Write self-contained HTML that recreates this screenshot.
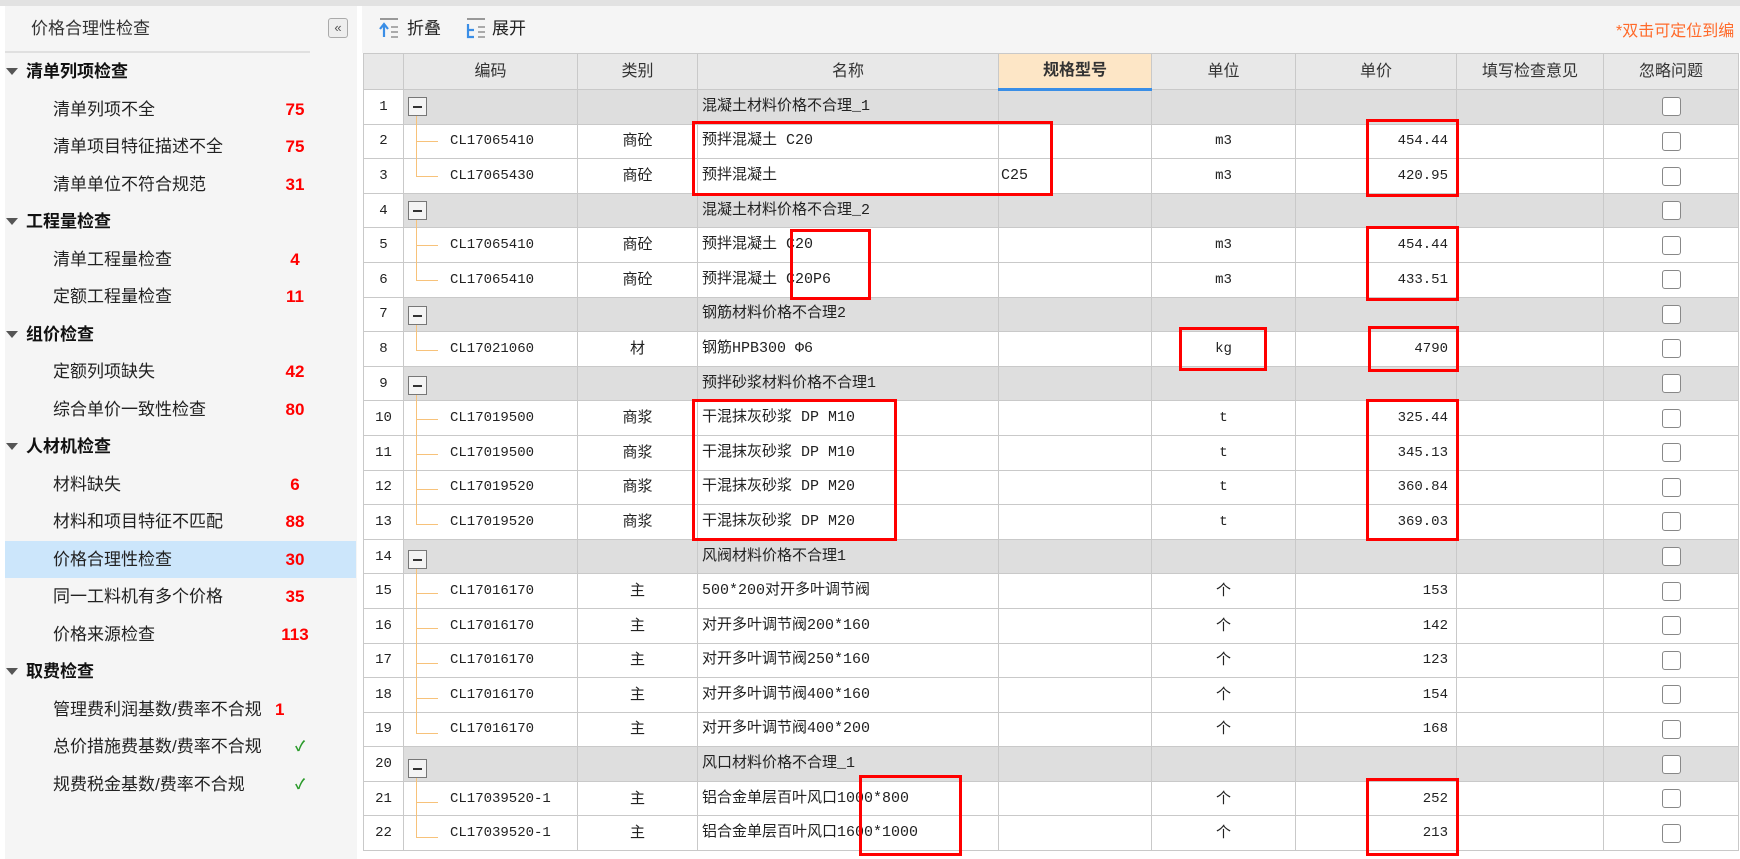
<!DOCTYPE html>
<html><head><meta charset="utf-8">
<style>
*{margin:0;padding:0;box-sizing:border-box}
body{width:1740px;height:859px;overflow:hidden;background:#fff;font-family:"Liberation Sans","Noto Sans CJK SC",sans-serif;position:relative}
.topstrip{position:absolute;left:0;top:0;width:1740px;height:6px;background:#e2e2e2}
.side{position:absolute;left:5px;top:6px;width:352px;height:853px;background:#f5f5f5}
.stitle{position:absolute;left:26px;top:8px;font-size:17px;color:#333}
.sline{position:absolute;left:0;top:45px;width:305px;height:2px;background:#e0e0e0}
.cbtn{position:absolute;left:323px;top:12px;width:20px;height:20px;border:1px solid #aaa;border-radius:3px;background:#eee;font-size:13px;line-height:17px;text-align:center;color:#555}
.si{position:absolute;left:0;width:352px;height:37px;line-height:37px;font-size:17px;color:#222}
.si.g{font-weight:bold;color:#111}
.si.g:before{content:"";position:absolute;left:6px;top:15px;border-left:6px solid transparent;border-right:6px solid transparent;border-top:7px solid #555}
.si.g span{position:absolute;left:26px}
.si.it span.t{position:absolute;left:53px}
.si .n{position:absolute;left:270px;width:50px;text-align:center;color:#f00;font-weight:bold}
.si .ck{position:absolute;left:262px;color:#2a9a2a;font-weight:bold;font-size:14px}
.si.sel{background:#cce6fb}
.tool{position:absolute;left:362px;top:6px;width:1378px;height:47px;background:#f5f5f5}
.tb{position:absolute;top:8px;font-size:17px;color:#222}
.hint{position:absolute;left:1616px;top:17px;font-size:16px;color:#ff6a2a;white-space:nowrap}
table{position:absolute;left:363px;top:53px;border-collapse:collapse;table-layout:fixed;width:1375px}
td,th{border:1px solid #c9c9c9;height:34.6px;font-size:15px;color:#222;white-space:nowrap;overflow:hidden;padding:0 4px;font-weight:normal;line-height:20px}
th{height:36px;background:#e8e8e8;font-size:16px;color:#333}
th.hl{background:#fde6c6;font-weight:bold;border-bottom:3px solid #3a8ee6}
td.rn{text-align:center;background:#fff;font-family:"Liberation Mono",monospace;font-size:14px}
tr.g td{background:#dedede}
tr.g td.rn{background:#fff}
td.code{position:relative;font-family:"Liberation Mono",monospace;font-size:14px;padding-left:46px}
td.c{text-align:center}
td.r{text-align:right;font-family:"Liberation Mono",monospace;font-size:14px;padding-right:8px}
td.nm{font-family:"Liberation Mono","Noto Sans CJK SC",monospace;font-size:15px}
td.mono{font-family:"Liberation Mono",monospace;font-size:14px;text-align:center}
.box{position:absolute;border:3px solid #f00}
.cb{display:inline-block;width:19px;height:19px;border:1px solid #888;border-radius:3px;background:#fff;vertical-align:middle}
.minus{position:absolute;width:19px;height:19px;border:1px solid #777;background:#f4f4f4;left:408px}
.minus:after{content:"";position:absolute;left:4px;top:8px;width:9px;height:1.5px;background:#333}
.vl{position:absolute;left:416px;width:1px;background:#f7c27a}
.hl2{position:absolute;left:416px;width:22px;height:1px;background:#f7c27a}
</style></head><body>
<div class="topstrip"></div>
<div class="side">
<div class="stitle">价格合理性检查</div>
<div class="cbtn">«</div>
<div class="sline"></div>
</div>
<div class="si g" style="top:53px"><span>清单列项检查</span></div>
<div class="si it" style="top:91px"><span class="t">清单列项不全</span><span class="n">75</span></div>
<div class="si it" style="top:128px"><span class="t">清单项目特征描述不全</span><span class="n">75</span></div>
<div class="si it" style="top:166px"><span class="t">清单单位不符合规范</span><span class="n">31</span></div>
<div class="si g" style="top:203px"><span>工程量检查</span></div>
<div class="si it" style="top:241px"><span class="t">清单工程量检查</span><span class="n">4</span></div>
<div class="si it" style="top:278px"><span class="t">定额工程量检查</span><span class="n">11</span></div>
<div class="si g" style="top:316px"><span>组价检查</span></div>
<div class="si it" style="top:353px"><span class="t">定额列项缺失</span><span class="n">42</span></div>
<div class="si it" style="top:391px"><span class="t">综合单价一致性检查</span><span class="n">80</span></div>
<div class="si g" style="top:428px"><span>人材机检查</span></div>
<div class="si it" style="top:466px"><span class="t">材料缺失</span><span class="n">6</span></div>
<div class="si it" style="top:503px"><span class="t">材料和项目特征不匹配</span><span class="n">88</span></div>
<div class="si it sel" style="top:541px;left:5px;width:351px"><span class="t" style="left:48px">价格合理性检查</span><span class="n" style="left:265px">30</span></div>
<div class="si it" style="top:578px"><span class="t">同一工料机有多个价格</span><span class="n">35</span></div>
<div class="si it" style="top:616px"><span class="t">价格来源检查</span><span class="n">113</span></div>
<div class="si g" style="top:653px"><span>取费检查</span></div>
<div class="si it" style="top:691px"><span class="t">管理费利润基数/费率不合规</span><span class="n" style="left:275px;width:auto">1</span></div>
<div class="si it" style="top:728px"><span class="t">总价措施费基数/费率不合规</span><span class="ck" style="left:295px">✓</span></div>
<div class="si it" style="top:766px"><span class="t">规费税金基数/费率不合规</span><span class="ck" style="left:295px">✓</span></div>

<div class="tool">
<svg style="position:absolute;left:16px;top:11px" width="22" height="22" viewBox="0 0 22 22"><path d="M2 2h18" stroke="#999" stroke-width="2"/><path d="M6 20V8M2 12l4-5 4 5" stroke="#3a8ee6" stroke-width="2.2" fill="none"/><path d="M13 10h7M13 15h7M13 20h7" stroke="#aaa" stroke-width="2"/></svg>
<span class="tb" style="left:45px">折叠</span>
<svg style="position:absolute;left:103px;top:11px" width="22" height="22" viewBox="0 0 22 22"><path d="M2 2h18" stroke="#999" stroke-width="2"/><path d="M3 7v13h6M3 13h6" stroke="#3a8ee6" stroke-width="2.2" fill="none"/><path d="M13 10h7M13 15h7M13 20h7" stroke="#aaa" stroke-width="2"/></svg>
<span class="tb" style="left:130px">展开</span>
</div>
<div class="hint">*双击可定位到编</div>

<table>
<colgroup><col style="width:40px"><col style="width:174px"><col style="width:120px"><col style="width:301px"><col style="width:153px"><col style="width:144px"><col style="width:161px"><col style="width:147px"><col style="width:135px"></colgroup>
<tr><th></th><th>编码</th><th>类别</th><th>名称</th><th class="hl">规格型号</th><th>单位</th><th>单价</th><th>填写检查意见</th><th>忽略问题</th></tr>
<tr class="g"><td class="rn">1</td><td></td><td></td><td class="nm">混凝土材料价格不合理_1</td><td></td><td></td><td></td><td></td><td class="c"><span class="cb"></span></td></tr>
<tr><td class="rn">2</td><td class="code">CL17065410</td><td class="c">商砼</td><td class="nm">预拌混凝土 C20</td><td></td><td class="mono">m3</td><td class="r">454.44</td><td></td><td class="c"><span class="cb"></span></td></tr>
<tr><td class="rn">3</td><td class="code">CL17065430</td><td class="c">商砼</td><td class="nm">预拌混凝土</td><td class="nm" style="padding-left:2px">C25</td><td class="mono">m3</td><td class="r">420.95</td><td></td><td class="c"><span class="cb"></span></td></tr>
<tr class="g"><td class="rn">4</td><td></td><td></td><td class="nm">混凝土材料价格不合理_2</td><td></td><td></td><td></td><td></td><td class="c"><span class="cb"></span></td></tr>
<tr><td class="rn">5</td><td class="code">CL17065410</td><td class="c">商砼</td><td class="nm">预拌混凝土 C20</td><td></td><td class="mono">m3</td><td class="r">454.44</td><td></td><td class="c"><span class="cb"></span></td></tr>
<tr><td class="rn">6</td><td class="code">CL17065410</td><td class="c">商砼</td><td class="nm">预拌混凝土 C20P6</td><td></td><td class="mono">m3</td><td class="r">433.51</td><td></td><td class="c"><span class="cb"></span></td></tr>
<tr class="g"><td class="rn">7</td><td></td><td></td><td class="nm">钢筋材料价格不合理2</td><td></td><td></td><td></td><td></td><td class="c"><span class="cb"></span></td></tr>
<tr><td class="rn">8</td><td class="code">CL17021060</td><td class="c">材</td><td class="nm">钢筋HPB300 Φ6</td><td></td><td class="mono">kg</td><td class="r">4790</td><td></td><td class="c"><span class="cb"></span></td></tr>
<tr class="g"><td class="rn">9</td><td></td><td></td><td class="nm">预拌砂浆材料价格不合理1</td><td></td><td></td><td></td><td></td><td class="c"><span class="cb"></span></td></tr>
<tr><td class="rn">10</td><td class="code">CL17019500</td><td class="c">商浆</td><td class="nm">干混抹灰砂浆 DP M10</td><td></td><td class="mono">t</td><td class="r">325.44</td><td></td><td class="c"><span class="cb"></span></td></tr>
<tr><td class="rn">11</td><td class="code">CL17019500</td><td class="c">商浆</td><td class="nm">干混抹灰砂浆 DP M10</td><td></td><td class="mono">t</td><td class="r">345.13</td><td></td><td class="c"><span class="cb"></span></td></tr>
<tr><td class="rn">12</td><td class="code">CL17019520</td><td class="c">商浆</td><td class="nm">干混抹灰砂浆 DP M20</td><td></td><td class="mono">t</td><td class="r">360.84</td><td></td><td class="c"><span class="cb"></span></td></tr>
<tr><td class="rn">13</td><td class="code">CL17019520</td><td class="c">商浆</td><td class="nm">干混抹灰砂浆 DP M20</td><td></td><td class="mono">t</td><td class="r">369.03</td><td></td><td class="c"><span class="cb"></span></td></tr>
<tr class="g"><td class="rn">14</td><td></td><td></td><td class="nm">风阀材料价格不合理1</td><td></td><td></td><td></td><td></td><td class="c"><span class="cb"></span></td></tr>
<tr><td class="rn">15</td><td class="code">CL17016170</td><td class="c">主</td><td class="nm">500*200对开多叶调节阀</td><td></td><td class="c">个</td><td class="r">153</td><td></td><td class="c"><span class="cb"></span></td></tr>
<tr><td class="rn">16</td><td class="code">CL17016170</td><td class="c">主</td><td class="nm">对开多叶调节阀200*160</td><td></td><td class="c">个</td><td class="r">142</td><td></td><td class="c"><span class="cb"></span></td></tr>
<tr><td class="rn">17</td><td class="code">CL17016170</td><td class="c">主</td><td class="nm">对开多叶调节阀250*160</td><td></td><td class="c">个</td><td class="r">123</td><td></td><td class="c"><span class="cb"></span></td></tr>
<tr><td class="rn">18</td><td class="code">CL17016170</td><td class="c">主</td><td class="nm">对开多叶调节阀400*160</td><td></td><td class="c">个</td><td class="r">154</td><td></td><td class="c"><span class="cb"></span></td></tr>
<tr><td class="rn">19</td><td class="code">CL17016170</td><td class="c">主</td><td class="nm">对开多叶调节阀400*200</td><td></td><td class="c">个</td><td class="r">168</td><td></td><td class="c"><span class="cb"></span></td></tr>
<tr class="g"><td class="rn">20</td><td></td><td></td><td class="nm">风口材料价格不合理_1</td><td></td><td></td><td></td><td></td><td class="c"><span class="cb"></span></td></tr>
<tr><td class="rn">21</td><td class="code">CL17039520-1</td><td class="c">主</td><td class="nm">铝合金单层百叶风口1000*800</td><td></td><td class="c">个</td><td class="r">252</td><td></td><td class="c"><span class="cb"></span></td></tr>
<tr><td class="rn">22</td><td class="code">CL17039520-1</td><td class="c">主</td><td class="nm">铝合金单层百叶风口1600*1000</td><td></td><td class="c">个</td><td class="r">213</td><td></td><td class="c"><span class="cb"></span></td></tr>
</table>

<!-- tree lines -->
<div class="vl" style="top:116px;height:60px"></div>
<div class="hl2" style="top:141px"></div><div class="hl2" style="top:176px"></div>
<div class="vl" style="top:220px;height:60px"></div>
<div class="hl2" style="top:245px"></div><div class="hl2" style="top:280px"></div>
<div class="vl" style="top:325px;height:25px"></div>
<div class="hl2" style="top:350px"></div>
<div class="vl" style="top:395px;height:129px"></div>
<div class="hl2" style="top:419px"></div><div class="hl2" style="top:454px"></div><div class="hl2" style="top:489px"></div><div class="hl2" style="top:524px"></div>
<div class="vl" style="top:569px;height:164px"></div>
<div class="hl2" style="top:593px"></div><div class="hl2" style="top:628px"></div><div class="hl2" style="top:663px"></div><div class="hl2" style="top:698px"></div><div class="hl2" style="top:733px"></div>
<div class="vl" style="top:778px;height:59px"></div>
<div class="hl2" style="top:802px"></div><div class="hl2" style="top:837px"></div>
<div class="minus" style="top:97px"></div>
<div class="minus" style="top:201px"></div>
<div class="minus" style="top:306px"></div>
<div class="minus" style="top:376px"></div>
<div class="minus" style="top:550px"></div>
<div class="minus" style="top:759px"></div>

<!-- red boxes -->
<div class="box" style="left:692px;top:121px;width:361px;height:75px"></div>
<div class="box" style="left:1366px;top:119px;width:93px;height:78px"></div>
<div class="box" style="left:790px;top:229px;width:81px;height:71px"></div>
<div class="box" style="left:1366px;top:226px;width:93px;height:75px"></div>
<div class="box" style="left:1179px;top:327px;width:88px;height:44px"></div>
<div class="box" style="left:1368px;top:326px;width:91px;height:46px"></div>
<div class="box" style="left:692px;top:399px;width:205px;height:142px"></div>
<div class="box" style="left:1366px;top:399px;width:93px;height:142px"></div>
<div class="box" style="left:859px;top:775px;width:103px;height:81px"></div>
<div class="box" style="left:1366px;top:778px;width:93px;height:78px"></div>
</body></html>
